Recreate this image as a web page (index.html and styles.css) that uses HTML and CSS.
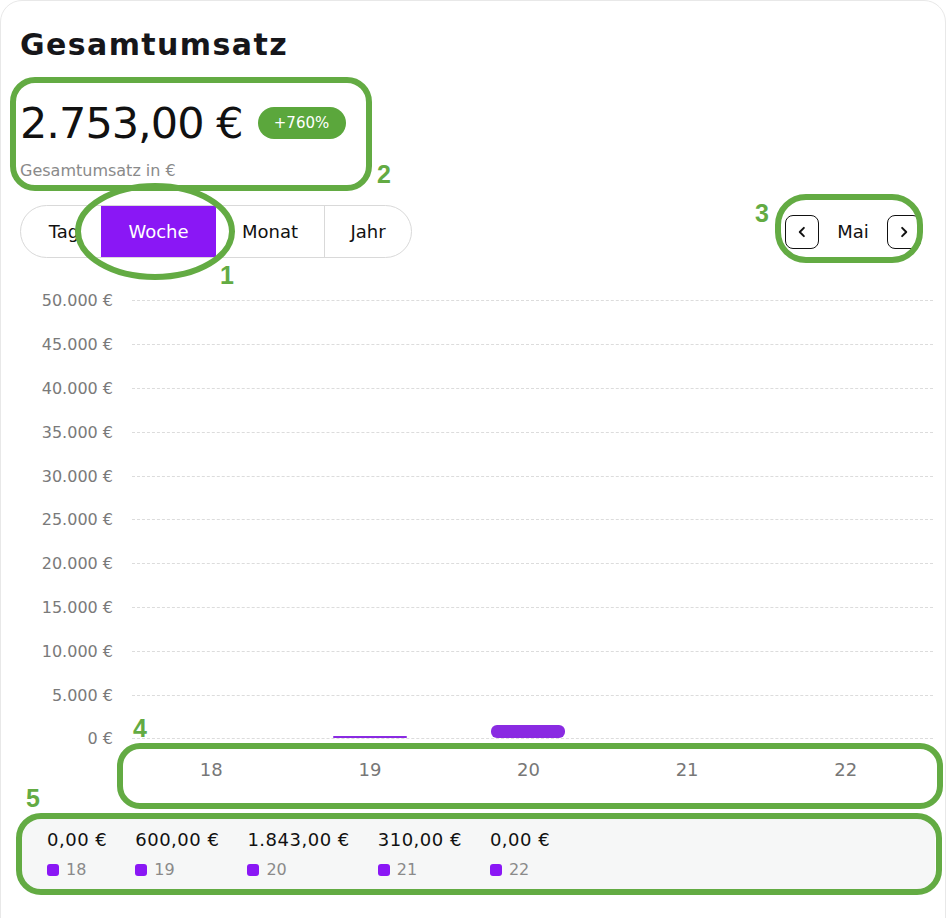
FILE: index.html
```html
<!DOCTYPE html>
<html lang="de">
<head>
<meta charset="utf-8">
<title>Gesamtumsatz</title>
<link rel="stylesheet" href="styles.css">
</head>
<body>
<div class="page">
  <section class="card">
    <h1 class="title">Gesamtumsatz</h1>
    <div class="amount-row">
      <span class="amount">2.753,00 €</span>
      <span class="badge">+760%</span>
    </div>
    <div class="subtitle">Gesamtumsatz in €</div>

    <div class="controls">
      <div class="tabs">
        <span class="tab tab-tag">Tag</span>
        <span class="tab tab-woche active">Woche</span>
        <span class="tab tab-monat">Monat</span>
        <span class="tab tab-jahr divider">Jahr</span>
      </div>
      <div class="nav">
        <span class="nav-btn"><svg viewBox="0 0 24 24" width="18" height="18"><path d="M14.5 6.5 9 12l5.5 5.5" fill="none" stroke="#111" stroke-width="2.6" stroke-linecap="round" stroke-linejoin="round"/></svg></span>
        <span class="nav-label">Mai</span>
        <span class="nav-btn"><svg viewBox="0 0 24 24" width="18" height="18"><path d="M9.5 6.5 15 12l-5.5 5.5" fill="none" stroke="#111" stroke-width="2.6" stroke-linecap="round" stroke-linejoin="round"/></svg></span>
      </div>
    </div>

    <div class="chart">
      <div class="grid">
        <div class="row"><span class="ylabel">50.000 €</span><span class="line"></span></div>
        <div class="row"><span class="ylabel">45.000 €</span><span class="line"></span></div>
        <div class="row"><span class="ylabel">40.000 €</span><span class="line"></span></div>
        <div class="row"><span class="ylabel">35.000 €</span><span class="line"></span></div>
        <div class="row"><span class="ylabel">30.000 €</span><span class="line"></span></div>
        <div class="row"><span class="ylabel">25.000 €</span><span class="line"></span></div>
        <div class="row"><span class="ylabel">20.000 €</span><span class="line"></span></div>
        <div class="row"><span class="ylabel">15.000 €</span><span class="line"></span></div>
        <div class="row"><span class="ylabel">10.000 €</span><span class="line"></span></div>
        <div class="row"><span class="ylabel">5.000 €</span><span class="line"></span></div>
        <div class="row"><span class="ylabel">0 €</span><span class="line"></span></div>
      </div>
      <div class="bars">
        <div class="col"></div>
        <div class="col"><div class="bar thin" style="height:2px"></div></div>
        <div class="col"><div class="bar" style="height:13px"></div></div>
        <div class="col"></div>
        <div class="col"></div>
      </div>
      <div class="xlabels">
        <span>18</span><span>19</span><span>20</span><span>21</span><span>22</span>
      </div>
    </div>

    <div class="legend">
      <div class="item"><div class="val">0,00 €</div><div class="key"><span class="dot"></span>18</div></div>
      <div class="item"><div class="val">600,00 €</div><div class="key"><span class="dot"></span>19</div></div>
      <div class="item"><div class="val">1.843,00 €</div><div class="key"><span class="dot"></span>20</div></div>
      <div class="item"><div class="val">310,00 €</div><div class="key"><span class="dot"></span>21</div></div>
      <div class="item"><div class="val">0,00 €</div><div class="key"><span class="dot"></span>22</div></div>
    </div>
  </section>

  <svg class="annotations" width="950" height="918" viewBox="0 0 950 918">
    <g fill="none" stroke="#63ab43" stroke-width="6">
      <rect x="13" y="80" width="356" height="108" rx="22"/>
      <ellipse cx="155" cy="231.5" rx="77" ry="45.5"/>
      <rect x="778" y="197" width="142" height="63" rx="28"/>
      <rect x="120" y="746" width="820" height="60" rx="20"/>
      <rect x="19" y="816" width="920" height="76" rx="22"/>
    </g>
    <g class="anno-num" fill="#63ab43">
      <text x="377" y="183">2</text>
      <text x="220" y="284">1</text>
      <text x="755" y="222">3</text>
      <text x="133" y="737">4</text>
      <text x="26" y="807">5</text>
    </g>
  </svg>
</div>
</body>
</html>
```

FILE: styles.css
```css
* { box-sizing: border-box; }

html, body {
  margin: 0;
  padding: 0;
  background: #ffffff;
}

body {
  font-family: "DejaVu Sans", "Open Sans", sans-serif;
  color: #111;
}

.page {
  position: relative;
  width: 950px;
  height: 918px;
  overflow: hidden;
}

.card {
  width: 946px;
  height: 960px;
  border: 1px solid #e8e8e8;
  border-radius: 22px;
  padding: 20px 12px 0 19px;
  background: #fff;
}

.title {
  margin: 6px 0 0 0;
  font-size: 30px;
  line-height: 36px;
  font-weight: 700;
  letter-spacing: 1.4px;
  color: #16161a;
}

.amount-row {
  display: flex;
  align-items: center;
  gap: 15px;
  margin-top: 38px;
  height: 44px;
}

.amount {
  font-size: 43px;
  line-height: 44px;
  font-weight: 400;
  letter-spacing: -1px;
  color: #111;
}

.badge {
  display: inline-flex;
  align-items: center;
  justify-content: center;
  width: 88px;
  height: 32px;
  border-radius: 16px;
  background: #5ba73c;
  color: #fff;
  font-size: 15px;
}

.subtitle {
  margin-top: 15px;
  font-size: 16px;
  line-height: 22px;
  color: #8a8a8a;
}

.controls {
  display: flex;
  justify-content: space-between;
  align-items: center;
  margin-top: 23px;
  padding-right: 12px;
}

.tabs {
  display: flex;
  height: 53px;
  border: 1px solid #d9d9d9;
  border-radius: 27px;
  overflow: hidden;
}

.tab {
  display: flex;
  align-items: center;
  justify-content: center;
  font-size: 18px;
  color: #111;
}

.tab-tag { width: 80px; padding-left: 6px; }
.tab-woche { width: 115px; }
.tab-monat { width: 108px; }
.tab-jahr { width: 87px; }

.tab.active {
  background: #8a17f5;
  color: #fff;
}

.tab.divider {
  border-left: 1px solid #d9d9d9;
}

.nav {
  display: flex;
  align-items: center;
  gap: 16px;
}

.nav-btn {
  display: flex;
  align-items: center;
  justify-content: center;
  width: 34px;
  height: 34px;
  border: 1.6px solid #111;
  border-radius: 8px;
}

.nav-label {
  font-size: 18px;
  width: 36px;
  text-align: center;
}

.chart {
  position: relative;
  margin-top: 21px;
}

.row {
  display: flex;
  align-items: center;
  height: 43.8px;
}

.ylabel {
  width: 93px;
  text-align: right;
  font-size: 16px;
  color: #7a7a7a;
  white-space: nowrap;
}

.line {
  flex: 1;
  margin-left: 19px;
  height: 0;
  border-top: 1px dashed #dcdcdc;
}

.bars {
  position: absolute;
  left: 112px;
  top: 0;
  width: 793px;
  height: 459px;
  display: flex;
  align-items: flex-end;
}

.col {
  flex: 1;
  display: flex;
  justify-content: center;
  align-items: flex-end;
}

.bar {
  width: 74px;
  background: #8a2be2;
  border-radius: 6px;
}

.bar.thin { border-radius: 1px; }

.xlabels {
  display: flex;
  margin-left: 112px;
  width: 793px;
  margin-top: -2px;
}

.xlabels span {
  flex: 1;
  text-align: center;
  font-size: 18px;
  line-height: 22px;
  color: #777;
}

.legend {
  display: flex;
  gap: 28px;
  margin-top: 36px;
  width: 915px;
  height: 72px;
  padding: 12px 0 0 27px;
  background: #f6f7f7;
  border-radius: 12px;
}

.val {
  font-size: 18px;
  line-height: 22px;
  letter-spacing: 0.5px;
  color: #111;
  white-space: nowrap;
}

.key {
  display: flex;
  align-items: center;
  gap: 7px;
  margin-top: 9px;
  font-size: 16px;
  line-height: 20px;
  color: #8a8a8a;
}

.dot {
  width: 12px;
  height: 12px;
  border-radius: 3px;
  background: #8a17f5;
}

.annotations {
  position: absolute;
  left: 0;
  top: 0;
  pointer-events: none;
}

.anno-num text {
  font-family: "Liberation Sans", Arial, sans-serif;
  font-weight: 700;
  font-size: 25px;
}
```
